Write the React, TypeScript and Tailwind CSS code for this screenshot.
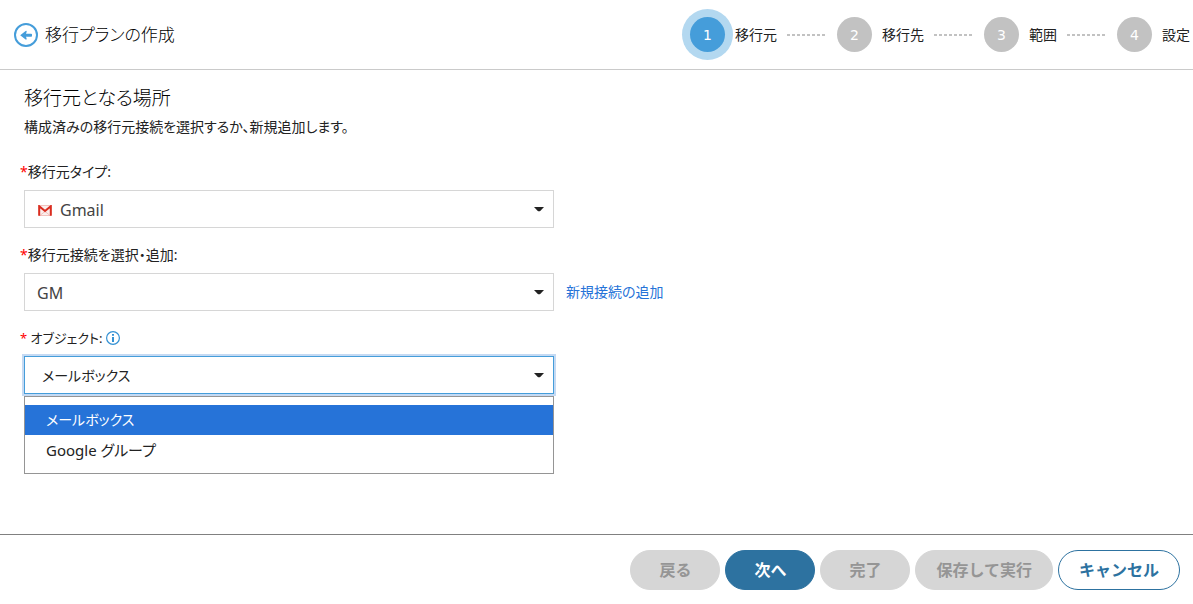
import React, { useState } from 'react';

const steps = ['移行元', '移行先', '範囲', '設定'];
const objectTypes = ['メールボックス', 'Google グループ'];

const BackIcon = () => (
  <svg viewBox="0 0 24 24" className="size-6" fill="none" aria-hidden="true">
    <circle cx="12" cy="12" r="11" stroke="#459dda" strokeWidth="2" />
    <path
      d="M6.2 12.2L11.6 7.9Q13 7.4 12.6 9L12 10.7H17.2Q18 10.7 18 11.5V12.9Q18 13.7 17.2 13.7H12L12.6 15.4Q13 17 11.6 16.5Z"
      fill="#459dda"
    />
  </svg>
);

const GmailIcon = () => (
  <svg viewBox="0 0 14 11" className="h-[11px] w-[14px]" fill="none" aria-hidden="true">
    <path d="M1 .5H13V10.5H1Z" fill="#fbefee" stroke="#efb5b0" strokeWidth=".8" />
    <path d="M2.5 10L7 6.5L11.5 10" stroke="#efb5b0" strokeWidth=".8" />
    <path d="M1.2 10.7V1.2L7 6L12.8 1.2V10.7" stroke="#da2d20" strokeWidth="2" />
  </svg>
);

const InfoIcon = () => (
  <svg viewBox="0 0 14 14" className="size-3.5" fill="none" aria-hidden="true">
    <circle cx="7" cy="7" r="6.4" stroke="#3391d4" strokeWidth="1.2" />
    <path d="M7 3V4.8M7 6V11" stroke="#3391d4" strokeWidth="2" />
  </svg>
);

const Caret = () => (
  <svg
    viewBox="0 0 10 5"
    className="pointer-events-none absolute top-[17px] right-2.5 h-[5px] w-[10px]"
    aria-hidden="true"
  >
    <path d="M0 0H10L6.5 3.8Q5 4.8 3.5 3.8Z" fill="#222" />
  </svg>
);

const Stepper: React.FC<{ current: number }> = ({ current }) => (
  <ol className="flex items-center gap-2.5 text-sm whitespace-nowrap">
    {steps.map((label, i) => (
      <React.Fragment key={label}>
        {i > 0 && (
          <li
            aria-hidden="true"
            className="h-0.5 w-10 bg-[repeating-linear-gradient(90deg,#c2c2c2_0_3px,transparent_3px_5px)]"
          />
        )}
        <li className="flex items-center gap-2.5">
          <span
            className={
              i === current
                ? "flex size-[35px] items-center justify-center rounded-full bg-[#459dda] font-['DejaVu_Sans',sans-serif] text-white ring-8 ring-[#b3d8f0]"
                : "flex size-[35px] items-center justify-center rounded-full bg-[#c2c2c2] font-['DejaVu_Sans',sans-serif] text-white"
            }
          >
            {i + 1}
          </span>
          <span>{label}</span>
        </li>
      </React.Fragment>
    ))}
  </ol>
);

const buttonBase = 'h-10 min-w-[90px] rounded-full border px-5 text-base font-bold whitespace-nowrap';
const disabledButton = `${buttonBase} border-[#d6d6d6] bg-[#d6d6d6] text-[#959595]`;

export default function App() {
  const [type, setType] = useState('Gmail');
  const [connection, setConnection] = useState('GM');
  const [objectType, setObjectType] = useState(objectTypes[0]);
  const [open, setOpen] = useState(true);

  return (
    <div className="flex min-h-screen flex-col bg-white font-['Noto_Sans','Noto_Sans_CJK_JP',sans-serif] text-[#222]">
      <header className="flex items-center justify-between border-b border-[#cacaca] py-[17px] pr-[3px] pl-3.5">
        <div className="flex items-center gap-[7px]">
          <button type="button" aria-label="戻る">
            <BackIcon />
          </button>
          <h1 className="text-[17px] leading-6 font-light text-black [font-feature-settings:'palt']">移行プランの作成</h1>
        </div>
        <Stepper current={0} />
      </header>

      <main className="grow px-6 pt-3.5 [font-feature-settings:'palt']">
        <h2 className="text-[19px] leading-7 font-light text-black">移行元となる場所</h2>
        <p className="mt-[5px] text-sm leading-5">構成済みの移行元接続を選択するか、新規追加します。</p>

        <div className="mt-[25px] max-w-[530px]">
          <label htmlFor="type" className="-ml-1 block text-sm leading-5">
            <span className="text-[#f00]">*</span>移行元タイプ:
          </label>
          <div className="relative mt-2">
            <span className="pointer-events-none absolute top-[15px] left-3.5">
              <GmailIcon />
            </span>
            <select
              id="type"
              value={type}
              onChange={e => setType(e.target.value)}
              className="h-[38px] w-full appearance-none border border-[#d6d6d6] bg-white pt-0.5 pl-[35px] text-base text-[#444]"
            >
              <option>Gmail</option>
            </select>
            <Caret />
          </div>
        </div>

        <div className="mt-[17px]">
          <label htmlFor="connection" className="-ml-1 block text-sm leading-5">
            <span className="text-[#f00]">*</span>移行元接続を選択・追加:
          </label>
          <div className="mt-2 flex items-center gap-3">
            <div className="relative w-full max-w-[530px]">
              <select
                id="connection"
                value={connection}
                onChange={e => setConnection(e.target.value)}
                className="h-[38px] w-full appearance-none border border-[#d6d6d6] bg-white pt-0.5 pl-3 text-base text-[#444]"
              >
                <option>GM</option>
              </select>
              <Caret />
            </div>
            <a href="#" className="text-sm leading-5 whitespace-nowrap text-[#2673d8]">新規接続の追加</a>
          </div>
        </div>

        <div className="mt-[17px] max-w-[530px]">
          <div className="-ml-1 flex items-center gap-1">
            <label htmlFor="object" className="text-[13px] leading-5">
              <span className="text-[#f00]">*</span> オブジェクト:
            </label>
            <button type="button" aria-label="情報">
              <InfoIcon />
            </button>
          </div>
          <div className="relative mt-2">
            <select
              id="object"
              value={objectType}
              onMouseDown={e => {
                e.preventDefault();
                setOpen(!open);
              }}
              onChange={e => setObjectType(e.target.value)}
              className="h-[38px] w-full appearance-none border border-[#459dda] bg-white pt-0.5 pl-[17px] text-sm ring-2 ring-[#c5daf3]"
            >
              {objectTypes.map(name => (
                <option key={name}>{name}</option>
              ))}
            </select>
            <Caret />
            {open && (
              <ul
                role="listbox"
                aria-label="オブジェクト"
                className="absolute inset-x-0 top-10 border border-[#959595] bg-white py-2"
              >
                {objectTypes.map(name => (
                  <li
                    key={name}
                    role="option"
                    aria-selected={name === objectType}
                    onClick={() => {
                      setObjectType(name);
                      setOpen(false);
                    }}
                    className={
                      name === objectType
                        ? 'bg-[#2673d8] px-[21px] text-sm leading-[30px] text-white'
                        : 'px-[21px] text-[15px] leading-[30px]'
                    }
                  >
                    {name}
                  </li>
                ))}
              </ul>
            )}
          </div>
        </div>
      </main>

      <footer className="flex justify-end gap-[5px] border-t border-[#808080] pt-[15px] pr-[13px] pb-3.5">
        <button type="button" disabled className={disabledButton}>戻る</button>
        <button type="button" className={`${buttonBase} border-[#2d72a0] bg-[#2d72a0] text-white`}>次へ</button>
        <button type="button" disabled className={disabledButton}>完了</button>
        <button type="button" disabled className={disabledButton}>保存して実行</button>
        <button type="button" className={`${buttonBase} border-[#2d72a0] bg-white text-[#2d72a0]`}>キャンセル</button>
      </footer>
    </div>
  );
}
